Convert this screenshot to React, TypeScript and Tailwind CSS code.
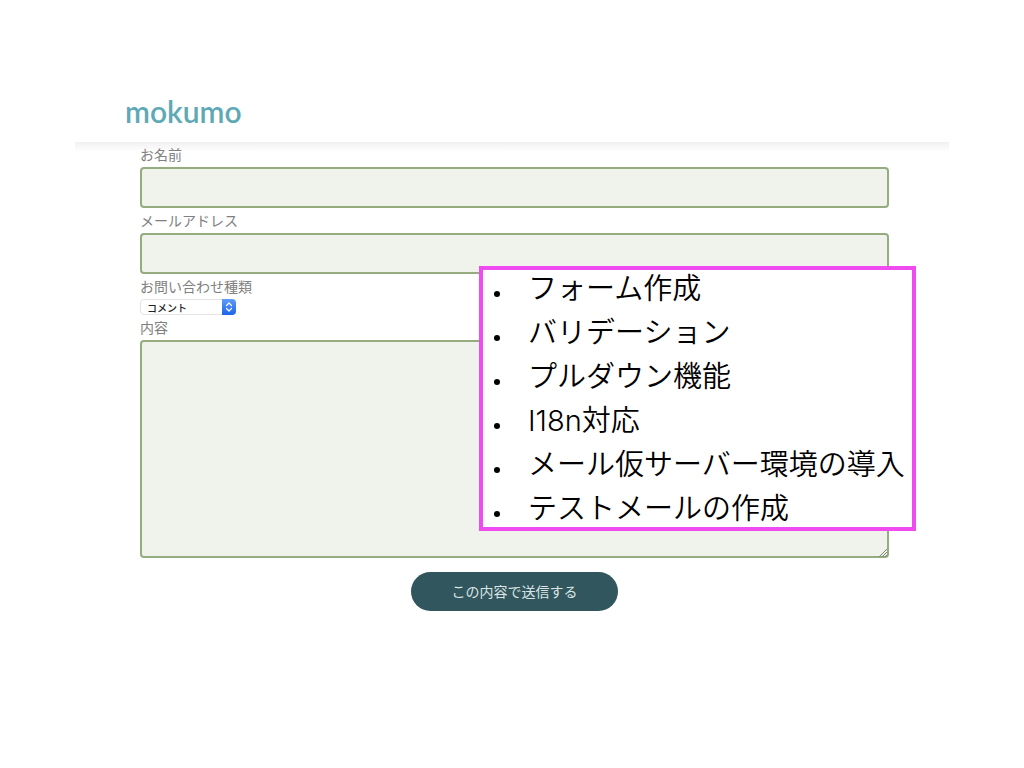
import React, { useState } from "react";

const NOTES = [
  "フォーム作成",
  "バリデーション",
  "プルダウン機能",
  "I18n対応",
  "メール仮サーバー環境の導入",
  "テストメールの作成",
];

const labelClass = "block w-fit text-sm leading-6 pb-px text-[#808080]";
const fieldClass = "block w-full rounded border-2 border-[#94ac80] bg-[#f0f3ec] px-3 text-sm text-[#444444] outline-none";

function ContactForm() {
  const [name, setName] = useState("");
  const [email, setEmail] = useState("");
  const [category, setCategory] = useState("コメント");
  const [body, setBody] = useState("");

  return (
    <form onSubmit={(e) => e.preventDefault()}>
      <label htmlFor="name" className={labelClass}>お名前</label>
      <input
        id="name"
        type="text"
        className={`${fieldClass} h-[41px]`}
        value={name}
        onChange={(e) => setName(e.target.value)}
      />

      <label htmlFor="email" className={labelClass}>メールアドレス</label>
      <input
        id="email"
        type="email"
        className={`${fieldClass} h-[41px]`}
        value={email}
        onChange={(e) => setEmail(e.target.value)}
      />

      <label htmlFor="category" className={labelClass}>お問い合わせ種類</label>
      <div className="relative h-4 w-24">
        <select
          id="category"
          className="block h-4 w-full appearance-none rounded-sm border border-[#e4e4e4] bg-white pt-px pl-1.5 text-[10px] leading-[14px] font-medium text-[#222222] outline-none"
          value={category}
          onChange={(e) => setCategory(e.target.value)}
        >
          <option>コメント</option>
          <option>ご質問</option>
          <option>その他</option>
        </select>
        <span className="pointer-events-none absolute inset-y-0 right-0 flex w-[14px] items-center justify-center rounded-r-sm bg-gradient-to-b from-[#5d9cf6] to-[#1b63ea]">
          <svg viewBox="0 0 8 12" className="h-3 w-2" fill="none" stroke="#ffffff" strokeWidth="1.2" strokeLinecap="round" strokeLinejoin="round">
            <path d="M1.5 4.5 4 2l2.5 2.5M1.5 7.5 4 10l2.5-2.5" />
          </svg>
        </span>
      </div>

      <label htmlFor="body" className={labelClass}>内容</label>
      <div className="relative">
        <textarea
          id="body"
          className={`${fieldClass} h-[218px] resize-none py-2`}
          value={body}
          onChange={(e) => setBody(e.target.value)}
        />
        {/* Resize grip */}
        <svg viewBox="0 0 10 10" className="pointer-events-none absolute right-0 bottom-0 h-2.5 w-2.5" fill="none" stroke="#7b8275" strokeWidth="1">
          <path d="M0 9 8 1M3 9l5-5M6 9l2-2" />
        </svg>
      </div>

      <button
        type="submit"
        className="mx-auto mt-3.5 block h-[39px] w-[207px] rounded-full bg-[#31565d] pb-0.5 text-sm text-[#dbe4e5]"
      >
        この内容で送信する
      </button>
    </form>
  );
}

export default function App() {
  return (
    <div className="min-h-screen bg-white px-[75px] pt-20 pb-16 font-['Noto_Sans_CJK_JP',sans-serif]">
      <header className="relative flex h-[62px] items-center pl-[50px]">
        <a href="#" className="font-['Lato','Noto_Sans_CJK_JP',sans-serif] text-3xl leading-8 font-semibold text-[#5ea9b5]">
          mokumo
        </a>
        {/* Soft shadow under the bar */}
        <div className="absolute inset-x-0 top-full h-2.5 bg-gradient-to-b from-[#f1f1f1] to-white" />
      </header>

      <main className="relative mr-[60px] ml-[65px]">
        <ContactForm />

        {/* Feature notes laid over the form */}
        <ul className="absolute top-[124px] -right-[27px] w-[437px] bg-white pt-px pl-[15px] font-['Inter','Noto_Sans_CJK_JP',sans-serif] text-[29px] leading-[44px] font-[350] text-black outline-4 -outline-offset-4 outline-[#f04bf0]">
          {NOTES.map((note) => (
            <li key={note} className="flex items-center gap-7 whitespace-nowrap">
              <span className="mt-2.5 h-1.5 w-1.5 rounded-full bg-black" />
              {note}
            </li>
          ))}
        </ul>
      </main>
    </div>
  );
}
